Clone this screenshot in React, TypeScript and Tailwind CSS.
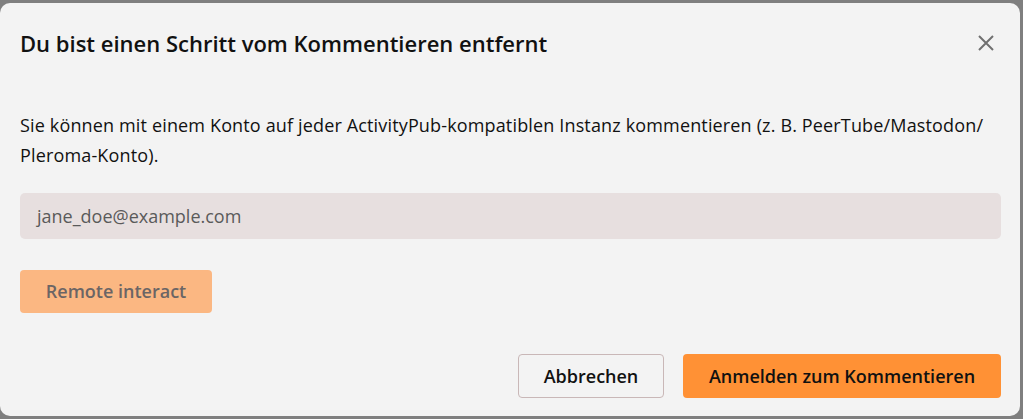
import React from "react";

export default function App() {
  const font = { fontFamily: '"Open Sans", "Noto Sans", sans-serif' };
  return (
    <div className="w-[1023px] h-[419px] bg-[#7f7f7f] pt-[3px] overflow-hidden" style={font}>
      <div className="w-[1020px] h-[413px] bg-[#f3f3f3] rounded-[10px] flex flex-col">
        <div className="flex items-center justify-between pl-5 pr-[26px] pt-[27px]">
          <h2 className="text-[22px] font-semibold text-[#111] leading-[26px]">Du bist einen Schritt vom Kommentieren entfernt</h2>
          <svg width="16" height="16" viewBox="0 0 16 16" className="text-[#707070]">
            <path d="M1 1L15 15M15 1L1 15" stroke="currentColor" strokeWidth="2" />
          </svg>
        </div>
        <div className="px-5 pt-[54px]">
          <p className="text-[18px] leading-[30px] text-[#111] tracking-[0.15px]">
            Sie können mit einem Konto auf jeder ActivityPub-kompatiblen Instanz kommentieren (z. B. PeerTube/Mastodon/
            <br />
            Pleroma-Konto).
          </p>
          <div className="mt-[23px] h-[46px] w-[981px] rounded-[5px] bg-[#e7dfdf] flex items-center px-[17px] text-[18px] text-[#5a5a5a]">
            jane_doe@example.com
          </div>
          <button className="mt-[31px] h-[43px] w-[192px] rounded-[4px] bg-[#fbb782] text-[18px] font-semibold text-[#6b6565]">
            Remote interact
          </button>
        </div>
        <div className="flex justify-end gap-[19px] pr-[19px] mt-[41px]">
          <button className="h-[44px] w-[146px] rounded-[4px] border border-[#c9b7b7] text-[18px] font-semibold text-[#111]">
            Abbrechen
          </button>
          <button className="h-[44px] w-[318px] rounded-[4px] bg-[#ff9135] text-[18px] font-semibold text-[#111]">
            Anmelden zum Kommentieren
          </button>
        </div>
      </div>
    </div>
  );
}
